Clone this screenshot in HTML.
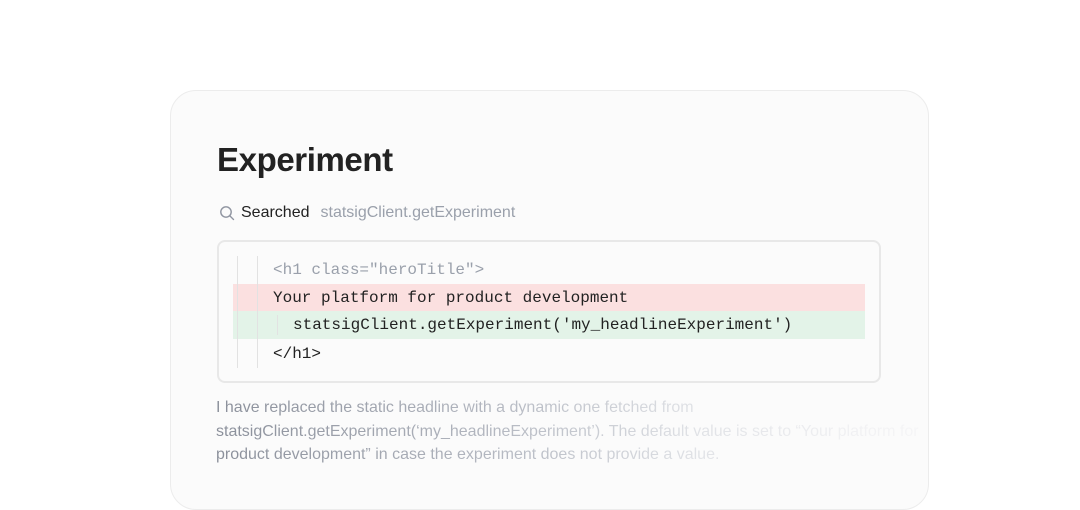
<!DOCTYPE html>
<html><head><meta charset="utf-8"><style>
*{margin:0;padding:0;box-sizing:border-box}
html,body{width:1080px;height:460px;overflow:hidden;background:#fff;font-family:"Liberation Sans",sans-serif}
.card{position:absolute;left:170px;top:90px;width:759px;height:420px;border:1.5px solid #ececec;border-radius:26px;background:#fbfbfb}
h1{position:absolute;left:217px;top:141px;font-size:33px;font-weight:700;color:#222;letter-spacing:-0.4px}
.search{position:absolute;left:219px;top:204px;font-size:16px;color:#222;display:flex;align-items:center}
.search svg{margin-right:6px}
.search .q{color:#9aa0ab;margin-left:11px}
.code{position:absolute;left:217px;top:240px;width:664px;height:143px;border:2px solid #e8e8e8;border-radius:8px;background:#fbfbfb}
.row{position:absolute;left:233px;width:632px;height:28px;font-family:"Liberation Mono",monospace;font-size:16px;line-height:28px}
.vl{position:absolute;width:1px;background:#e2e2e2}
.p{position:absolute;left:216px;top:396px;width:760px;font-size:16px;line-height:23.5px;
background:linear-gradient(90deg,#8a8f9a 0px,#b4b8c1 280px,#e0e2e6 480px,#f2f2f4 650px,#f8f8f9 760px);-webkit-background-clip:text;background-clip:text;color:transparent}
</style></head><body>
<div class="card"></div>
<h1>Experiment</h1>
<div class="search"><svg width="16" height="16" viewBox="0 0 16 16" fill="none" stroke="#8f94a0" stroke-width="1.4"><circle cx="7" cy="7" r="5.2"/><path d="M11 11l3.5 3.5" stroke-linecap="round"/></svg>Searched<span class="q">statsigClient.getExperiment</span></div>
<div class="code"></div>
<div class="row" style="top:256px;color:#9aa0ab"><span style="padding-left:40px">&lt;h1 class="heroTitle"&gt;</span></div>
<div class="row" style="top:284px;background:#fbe0e0;color:#222"><span style="padding-left:40px">Your platform for product development</span></div>
<div class="row" style="top:311px;background:#e3f3e8;color:#222"><span style="padding-left:60px">statsigClient.getExperiment('my_headlineExperiment')</span></div>
<div class="row" style="top:340px;color:#222"><span style="padding-left:40px">&lt;/h1&gt;</span></div>
<div class="vl" style="left:237px;top:256px;height:112px"></div>
<div class="vl" style="left:257px;top:256px;height:112px"></div>
<div class="vl" style="left:277px;top:315px;height:20px"></div>
<div class="p">I have replaced the static headline with a dynamic one fetched from<br>statsigClient.getExperiment(‘my_headlineExperiment’). The default value is set to “Your platform for<br>product development” in case the experiment does not provide a value.</div>
</body></html>
